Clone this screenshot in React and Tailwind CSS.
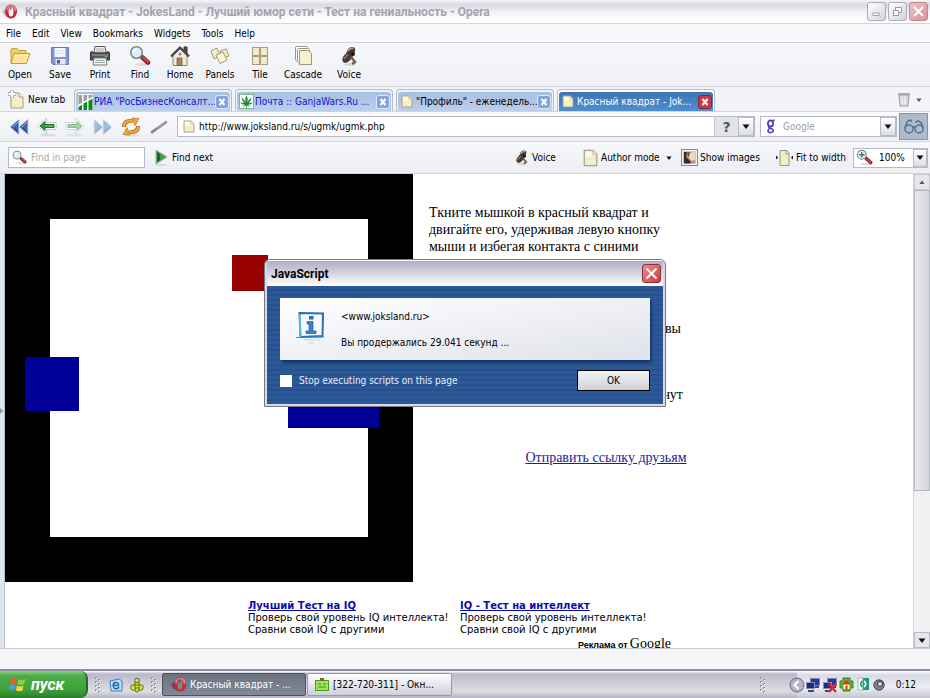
import React from "react";

const UI = "font-['DejaVu_Sans_Condensed','Noto_Sans',sans-serif]";

function OperaIcon({ dim }) {
  return (
    <svg width="16" height="17" viewBox="0 0 16 17" className="shrink-0">
      <path d="M0 8 Q2 14 8 15 L6 5 Z" fill={dim ? "#b9a4ac" : "#4d3a45"} opacity="0.7" />
      <ellipse cx="9" cy="8.500" rx="6" ry="7" fill="#c22a32" />
      <path d="M4 5 Q9 -1 14 4 Q15 7 13 9 Q12 3 9 3 Q6 4 5 9 Z" fill="#e57f80" />
      <ellipse cx="9" cy="8.500" rx="2.500" ry="5" fill={dim ? "#f4f0f4" : "#7f8898"} />
      <path d="M7 4.500 Q8.500 3 10 4.500 L9 8 Z" fill="#8e1f29" opacity="0.6" />
    </svg>
  );
}

function DocIcon({ w = 12, h = 13 }) {
  return (
    <svg width={w} height={h} viewBox="0 0 12 14" preserveAspectRatio="none" className="shrink-0">
      <path d="M1 1 H8 L11 4 V13 H1 Z" fill="#f5edc4" stroke="#a5a192" strokeWidth="1" />
      <path d="M2 2 H7 V6 H2 Z" fill="#fffbe6" />
      <path d="M8 1 V4 H11 Z" fill="#fff" stroke="#b8b29a" strokeWidth="0.7" />
    </svg>
  );
}

function OpenIcon() {
  return (
    <svg width="22" height="22" viewBox="0 0 22 22">
      <path d="M2 18 V5 Q2 3.500 4 3.500 H8 L10 5.500 H17 V9" fill="#f3cf62" stroke="#c89b36" />
      <path d="M2 18.500 L5 8.500 H21 L17.500 18.500 Z" fill="#ffe595" stroke="#c89a35" />
      <path d="M6 10 H19" stroke="#fff6cd" />
    </svg>
  );
}
function SaveIcon() {
  return (
    <svg width="22" height="22" viewBox="0 0 22 22">
      <path d="M2.500 2.500 H19.500 V19.500 H4 L2.500 18 Z" fill="#8496d6" stroke="#6a7abc" />
      <rect x="5.500" y="3" width="11" height="9" fill="#f4f6fd" />
      <path d="M7 5.500 H15 M7 8 H15" stroke="#dbe1f4" />
      <rect x="6.500" y="14" width="10" height="5.500" fill="#e3e7f5" />
      <rect x="8" y="15" width="3" height="3.500" fill="#4c5ba1" />
    </svg>
  );
}
function PrintIcon() {
  return (
    <svg width="22" height="22" viewBox="0 0 22 22">
      <path d="M5 8 L6 1.500 H16 L17 8 Z" fill="#f2f2f2" stroke="#555" />
      <path d="M7 4 H15 M7 6 H15" stroke="#aaa" />
      <path d="M1.500 8 Q1.500 6.500 3 6.500 L5 8 H17 L19 6.500 Q20.500 7 20.500 9 V15 H1.500 Z" fill="#55575b" stroke="#303236" />
      <path d="M3 10 H19" stroke="#9b9da3" />
      <path d="M5 13 H17 L18 20 H4 Z" fill="#f4f4f0" stroke="#777" />
      <path d="M6.500 15.500 H15.500 M6 17.500 H16" stroke="#9aa" />
      <rect x="16" y="11" width="2" height="1" fill="#76cf65" />
    </svg>
  );
}
function MagnifierIcon({ size = 22, plus }) {
  return (
    <svg width={size} height={size} viewBox="0 0 22 22" className="shrink-0">
      <ellipse cx="13" cy="19.500" rx="7" ry="1.500" fill="#d9dade" />
      <path d="M12 11 L14 13" stroke="#666" strokeWidth="2.500" />
      <path d="M13.500 12.500 L19 17.500" stroke="#7d1f24" strokeWidth="4.500" strokeLinecap="round" />
      <path d="M14 12.500 L19 17" stroke="#cf4a4c" strokeWidth="2.200" strokeLinecap="round" />
      <circle cx="7.500" cy="7.500" r="5.800" fill="#dceef6" stroke="#7d888f" strokeWidth="1.500" />
      <path d="M4 7 Q5 3.500 9 4" stroke="#fff" strokeWidth="1.500" fill="none" />
      {plus && <path d="M7.500 4 V11 M4 7.500 H11" stroke="#3c7a55" strokeWidth="1.800" />}
    </svg>
  );
}
function HomeIcon() {
  return (
    <svg width="22" height="22" viewBox="0 0 22 22">
      <path d="M4 10 L11 4 L18 10 V20.500 H4 Z" fill="#f2ecd5" stroke="#8c8672" />
      <path d="M15 2 H18 V9 L15 6 Z" fill="#6b4a40" stroke="#3b2d2b" />
      <path d="M2 11.500 L11 2.500 L20 11.500" stroke="#46484d" strokeWidth="2.400" fill="none" strokeLinejoin="round" />
      <rect x="8" y="13" width="5" height="7.500" fill="#a88262" stroke="#6d5640" strokeWidth="0.700" />
      <circle cx="11" cy="9" r="1.500" fill="#77889b" />
    </svg>
  );
}
function PanelsIcon() {
  return (
    <svg width="22" height="22" viewBox="0 0 22 22">
      <g stroke="#a29b7a" fill="#f4ecc6" strokeLinejoin="round">
        <path d="M11 6 L17 4 L20 11 L14 13 Z" />
        <path d="M2 6 L8 3 L11 11 L5 14 Z" />
        <path d="M7 10 L14 7 L18 15 L11 18.500 Z" fill="#fff7d8" />
      </g>
    </svg>
  );
}
function TileIcon() {
  return (
    <svg width="22" height="22" viewBox="0 0 22 22">
      <g fill="#f3ebc7" stroke="#a59f88">
        <rect x="3.500" y="2.500" width="7" height="8" />
        <rect x="11.500" y="2.500" width="7" height="8" />
        <rect x="3.500" y="11.500" width="7" height="8" />
        <rect x="11.500" y="11.500" width="7" height="8" />
      </g>
    </svg>
  );
}
function CascadeIcon() {
  return (
    <svg width="22" height="22" viewBox="0 0 22 22">
      <g stroke="#9c977f" strokeLinejoin="round">
        <rect x="3.500" y="1.500" width="12" height="14" rx="1" fill="#fff" />
        <rect x="5.500" y="3.500" width="12" height="14" rx="1" fill="#fff" />
        <path d="M7.500 5.500 H16 L19.500 8.500 V19.500 H7.500 Z" fill="#f8f1cf" />
      </g>
    </svg>
  );
}
function VoiceIcon({ size = 22 }) {
  return (
    <svg width={size} height={size} viewBox="0 0 22 22" className="shrink-0">
      <ellipse cx="12" cy="19.500" rx="6" ry="1.500" fill="#d8d8dc" />
      <path d="M9 7 Q10 2 14 2 Q18 2 17 6 L15 11 Q11 18 7 18 Q3 17 5 12 Z" fill="#433832" />
      <path d="M10 6 Q12 2.500 15.500 3.500" stroke="#a59d99" strokeWidth="1.800" fill="none" />
      <path d="M6 14 L10 9" stroke="#8a7a70" strokeWidth="1.500" />
      <path d="M13 12 L17 17 L14 19" stroke="#7b5b42" strokeWidth="2.400" fill="none" />
      <circle cx="15" cy="9" r="2" fill="#1f1a19" />
    </svg>
  );
}

const tools = [
  ["Open", <OpenIcon />, "w-10"],
  ["Save", <SaveIcon />, "w-10"],
  ["Print", <PrintIcon />, "w-10"],
  ["Find", <MagnifierIcon />, "w-10"],
  ["Home", <HomeIcon />, "w-10"],
  ["Panels", <PanelsIcon />, "w-10"],
  ["Tile", <TileIcon />, "w-10"],
  ["Cascade", <CascadeIcon />, "w-[46px]"],
  ["Voice", <VoiceIcon />, "w-[46px]"],
];

function ChartFavicon() {
  return (
    <svg width="15" height="16" viewBox="0 0 15 16" className="shrink-0">
      <rect width="15" height="16" fill="#f5faf3" />
      <path d="M0.500 1 H4 V9 L0.500 11 Z M5.500 1 H9 V6 L5.500 8 Z M10.500 1 H14.500 V3 L10.500 5 Z" fill="#98a09a" />
      <path d="M0.500 16 V13 L4 10.500 V16 Z M5.500 16 V9.500 L9 7.500 V16 Z M10.500 16 V6.500 L14.500 4.500 V16 Z" fill="#108a1c" />
      <path d="M0 12 Q6 8 15 3.500" stroke="#fff" strokeWidth="1.200" fill="none" />
    </svg>
  );
}
function LeafFavicon() {
  return (
    <svg width="15" height="15" viewBox="0 0 15 15" className="shrink-0">
      <rect x="0.500" y="0.500" width="14" height="14" fill="#fff" stroke="#7fb884" />
      <path
        d="M7.500 1 L8.800 5 L8.300 8 L12.500 3 L11.500 7 L9.500 9 L14 8.500 L11.500 10.500 L9 10.500 L11.500 13 L8 11.500 L7.800 14 H7.200 L7 11.500 L3.500 13 L6 10.500 L3.500 10.500 L1 8.500 L5.500 9 L3.500 7 L2.500 3 L6.700 8 L6.200 5 Z"
        fill="#1c8a34"
      />
    </svg>
  );
}

function Tab({ icon, text, color, active }) {
  return (
    <div
      className={
        "mr-[3px] flex h-[22px] w-[158px] items-center rounded-t-[4px] border border-b-0 border-[#b4bdcb] px-px pt-[2px] " +
        (active ? "bg-white" : "bg-[#eef2fa]")
      }
    >
      <div
        className={
          "flex h-full min-w-0 flex-1 items-center gap-px rounded-t-[3px] px-px " +
          (active ? "bg-linear-to-b from-[#3d74b5] to-[#4d8fd0]" : "bg-linear-to-b from-[#a9bfe2] to-[#bccfeb]")
        }
      >
        <span className="flex w-4 shrink-0 justify-center">{icon}</span>
        <button className={"min-w-0 flex-1 text-left whitespace-nowrap " + color}>{text}</button>
        <button
          aria-label="Close tab"
          className={
            "flex h-[14px] w-[14px] shrink-0 items-center justify-center rounded-[3px] border " +
            (active ? "border-[#8a2532] bg-[#c9394a]" : "border-[#dfe9f8] bg-[#7fa6dc]")
          }
        >
          <svg width="8" height="8" viewBox="0 0 8 8">
            <path d="M1.500 1 L6.500 7 M6.500 1 L1.500 7" stroke="#fff" strokeWidth="2" />
          </svg>
        </button>
      </div>
    </div>
  );
}

function Arrow({ color = "#111", up, small }) {
  return (
    <svg width={small ? 6 : 8} height={small ? 4 : 5} viewBox="0 0 8 5">
      <path d={up ? "M0.500 5 L4 0.500 L7.500 5 Z" : "M0.500 0.500 H7.500 L4 5 Z"} fill={color} />
    </svg>
  );
}

const NAV = "flex h-6 w-[28px] items-center justify-center";

function NavIcons() {
  return (
    <div className="flex w-[169px] items-center">
      <button aria-label="Rewind" className={NAV}>
        <svg width="20" height="18" viewBox="0 0 20 18">
          <path d="M10 1 V17 L1 9 Z M19 1 V17 L10 9 Z" fill="#3565ad" stroke="#d3dbe8" />
          <path d="M9 4 L4 9 M18 4 L13 9" stroke="#8eb4e6" />
          <path d="M9 14 L5 10 M18 14 L14 10" stroke="#1c3f7c" />
        </svg>
      </button>
      <button aria-label="Back" className={NAV}>
        <svg width="20" height="20" viewBox="0 0 20 20">
          <ellipse cx="11" cy="18" rx="8" ry="1.500" fill="#dadce0" />
          <path d="M0.500 9 L9.500 1 V5.500 H19 V12.500 H9.500 V17 Z" fill="#fff" stroke="#c6cace" />
          <path d="M3 9 L8 4.500 V7.500 H17 V10.500 H8 V13.500 Z" fill="#38993a" stroke="#256d2c" />
          <path d="M8 9 H16" stroke="#78c96b" />
        </svg>
      </button>
      <button aria-label="Forward" className={NAV}>
        <svg width="20" height="20" viewBox="0 0 20 20">
          <ellipse cx="9" cy="18" rx="8" ry="1.500" fill="#e0e2e6" />
          <path d="M19.500 9 L10.500 1 V5.500 H1 V12.500 H10.500 V17 Z" fill="#fff" stroke="#d2d6d9" />
          <path d="M17 9 L12 4.500 V7.500 H3 V10.500 H12 V13.500 Z" fill="#a6d3a6" stroke="#8dbb91" />
        </svg>
      </button>
      <button aria-label="Fast forward" className={NAV}>
        <svg width="20" height="18" viewBox="0 0 20 18">
          <path d="M1 1 V17 L10 9 Z M10 1 V17 L19 9 Z" fill="#a0b9de" stroke="#dde4ee" />
          <path d="M2.500 14 L8 9.500 M11.500 14 L17 9.500" stroke="#8199c2" />
        </svg>
      </button>
      <button aria-label="Reload" className={NAV}>
        <svg width="20" height="20" viewBox="0 0 20 20">
          <ellipse cx="11" cy="18.500" rx="7" ry="1" fill="#d8d9dd" />
          <g fill="none" stroke="#ab6c22" strokeWidth="4">
            <path d="M3 10 Q3 4 9 4 H11" />
            <path d="M17 9 Q17 15 11 15 H9" />
          </g>
          <g fill="none" stroke="#f4a636" strokeWidth="2.600">
            <path d="M3 9.500 Q3 4 9 4 H12" />
            <path d="M17 9.500 Q17 15 11 15 H8" />
          </g>
          <path d="M11 1 L18 1.500 L14 8.500 Z" fill="#f4a636" stroke="#b8731f" strokeWidth="0.700" />
          <path d="M9 18 L2 17.500 L6 10.500 Z" fill="#f4a636" stroke="#b8731f" strokeWidth="0.700" />
        </svg>
      </button>
      <button aria-label="Wand" className={NAV}>
        <svg width="20" height="18" viewBox="0 0 20 18">
          <path d="M2 16 L17 5" stroke="#d5d7db" strokeWidth="2" />
          <path d="M3 14 L17 4" stroke="#80848b" strokeWidth="2.400" strokeLinecap="round" />
          <path d="M8 10 L17 3.500" stroke="#b4b8bf" />
        </svg>
      </button>
    </div>
  );
}

function Grip() {
  return (
    <svg width="7" height="18" viewBox="0 0 7 18">
      {[1, 5, 9, 13].map((y) => (
        <g key={y}>
          <rect x="0" y={y} width="2" height="2" fill="#8f91a4" />
          <rect x="1" y={y + 1} width="1" height="1" fill="#fff" />
          <rect x="3" y={y + 2} width="2" height="2" fill="#8f91a4" />
          <rect x="4" y={y + 3} width="1" height="1" fill="#fff" />
        </g>
      ))}
    </svg>
  );
}

function Monitors({ off }) {
  return (
    <svg width="16" height="16" viewBox="0 0 16 16">
      <rect x="5.500" y="1.500" width="9" height="7" fill="#2536a0" stroke="#8087ab" />
      <rect x="1.500" y="5.500" width="8" height="6" fill="#1c2a8c" stroke="#8a90b0" />
      <path d="M3 14 H9 M10 10 H14" stroke="#44485f" strokeWidth="2" />
      {off && <path d="M7 7 L14 15 M14 7 L7 15" stroke="#e2222a" strokeWidth="2.400" />}
    </svg>
  );
}

function Dialog() {
  return (
    <div
      role="dialog"
      aria-label="JavaScript"
      className="absolute top-[259px] left-1/2 w-[402px] -translate-x-1/2 overflow-hidden rounded-t-[6px] border border-[#77778e] bg-[#d9d9e4] p-[2px] pt-0"
    >
      <header className="flex h-[26px] items-center justify-between border-t border-white bg-linear-to-b from-[#adadc6] via-[#d5d5e1] to-[#ffffff] pr-[2px] pl-[4px]">
        <h2 className="font-[Roboto,sans-serif] text-xs font-bold text-black">JavaScript</h2>
        <button
          aria-label="Close"
          className="flex h-[19px] w-[19px] items-center justify-center rounded-[3px] border border-[#8e3440] bg-linear-to-br from-[#ec8d8b] to-[#c63a45]"
        >
          <svg width="13" height="13" viewBox="0 0 13 13">
            <path d="M1.500 1.500 L11.500 11.500 M11.500 1.500 L1.500 11.500" stroke="#fff" strokeWidth="2" />
          </svg>
        </button>
      </header>
      <div className="flex flex-col bg-[repeating-linear-gradient(to_bottom,#2b5997_0px,#2b5997_3px,#28528e_3px,#28528e_5px)] px-[13px] pt-[12px] pb-[13px]">
        <div className="flex h-[62px] bg-linear-to-br from-white to-[#dfe2ea] shadow-[2px_3px_2px_#173a6c]">
          <svg width="30" height="37" viewBox="0 0 30 37" className="mt-[12px] ml-[16px] shrink-0">
            <path d="M3.500 3 L27 3.500 L26.500 26 L4.500 27 Z" fill="#f6fbff" stroke="#2670b6" strokeWidth="2" />
            <path d="M4 4 V27" stroke="#58b1e8" strokeWidth="2" />
            <rect x="13" y="6" width="4.500" height="3.500" fill="#2c68ab" />
            <path d="M11 11.500 H17 V21 H20 V23.500 H10 V21 H13 V14 H11 Z" fill="#3c82c6" stroke="#265d9d" strokeWidth="0.700" />
            <path d="M0 27.500 L28 27" stroke="#3f8ccb" />
            <path d="M8 30 H24 M13 33 H18" stroke="#d6e5f2" strokeWidth="2" fill="none" />
          </svg>
          <div className="flex flex-col gap-[13px] pt-[12px] pl-[15px]">
            <p className="leading-[13px]">&lt;www.joksland.ru&gt;</p>
            <p className="leading-[13px]">Вы продержались 29.041 секунд ...</p>
          </div>
        </div>
        <div className="mt-[10px] flex items-center justify-between">
          <label className="flex items-center gap-[7px] text-[#e4effc]">
            <input type="checkbox" className="h-[12px] w-[12px] appearance-none bg-white" />
            Stop executing scripts on this page
          </label>
          <button className="h-[21px] w-[73px] border border-black bg-linear-to-b from-[#f2f2f5] to-[#d0d2d9]">OK</button>
        </div>
      </div>
    </div>
  );
}

export default function App() {
  return (
    <div className={"relative flex h-screen flex-col overflow-hidden bg-[#f3f4f8] text-[10px] text-black " + UI}>
      <header className="flex h-6 shrink-0 items-center border-b border-[#d2d4dc] bg-[linear-gradient(#f5f5f9_0px,#d8d8e4_5px,#f2f2f7_12px,#ffffff_22px)] pr-[2px] pl-[2px]">
        <OperaIcon dim />
        <h1 className="min-w-0 flex-1 truncate pl-[7px] font-[Roboto,sans-serif] text-xs font-bold text-[#a3a3a9]">
          Красный квадрат - JokesLand - Лучший юмор сети - Тест на гениальность - Opera
        </h1>
        <div className="flex gap-[2px]">
          <button aria-label="Minimize" className="flex h-[19px] w-[19px] items-center justify-center rounded-[3px] border border-[#aaaab8] bg-linear-to-br from-white to-[#d3d3de]">
            <svg width="11" height="11" viewBox="0 0 11 11"><rect x="2" y="7" width="6" height="2.500" fill="#fff" stroke="#a4a4b0" /></svg>
          </button>
          <button aria-label="Restore" className="flex h-[19px] w-[19px] items-center justify-center rounded-[3px] border border-[#aaaab8] bg-linear-to-br from-white to-[#d3d3de]">
            <svg width="11" height="11" viewBox="0 0 11 11" fill="#fff" stroke="#9a9aa8">
              <rect x="3.500" y="1.500" width="6" height="5" /><rect x="1.500" y="4.500" width="5" height="5" />
            </svg>
          </button>
          <button aria-label="Close" className="flex h-[19px] w-[19px] items-center justify-center rounded-[3px] border border-[#bd8890] bg-linear-to-br from-[#f2c3c4] to-[#dc9096]">
            <svg width="11" height="11" viewBox="0 0 11 11"><path d="M1 1 L10 10 M10 1 L1 10" stroke="#fff" strokeWidth="2" /></svg>
          </button>
        </div>
      </header>

      <nav className="flex h-[19px] shrink-0 items-center gap-[11px] border-b border-[#d0d2da] bg-[#f8f9fb] pl-[6px]">
        {["File", "Edit", "View", "Bookmarks", "Widgets", "Tools", "Help"].map((m) => (
          <button key={m}>{m}</button>
        ))}
      </nav>

      <div className="flex h-[44px] shrink-0 border-b border-[#d3d5dd] bg-linear-to-b from-[#f6f7fa] to-[#eff0f5]">
        {tools.map(([label, icon, w]) => (
          <button key={label} className={"flex flex-col items-center pt-[2px] " + w}>
            {icon}
            <span className="mt-[1px] leading-[14px]">{label}</span>
          </button>
        ))}
      </div>

      <div className="flex h-[25px] shrink-0 items-end justify-between border-b border-[#d3d5dd] pl-[8px]">
        <div className="flex items-end">
          <button className="flex h-[23px] w-[66px] items-center gap-[3px]">
            <svg width="17" height="19" viewBox="0 0 17 19" className="shrink-0">
              <path d="M4 3 H11 L15 7 V18 H3 V5 Z" fill="#f5edc6" stroke="#a39e86" />
              <path d="M11 3 V7 H15" fill="#fff" stroke="#a39e86" />
              <path d="M4 0 V8 M0 4 H8" stroke="#a5a5a5" strokeWidth="3.500" />
              <path d="M4 0.500 V7.500 M0.500 4 H7.500" stroke="#fff" strokeWidth="2" />
            </svg>
            <span className="whitespace-nowrap">New tab</span>
          </button>
          <Tab icon={<ChartFavicon />} text={'РИА "РосБизнесКонсалт...'} color="text-[#1014d8]" />
          <Tab icon={<LeafFavicon />} text="Почта :: GanjaWars.Ru ..." color="text-[#1014d8]" />
          <Tab icon={<DocIcon />} text={'"Профиль" - еженедель...'} color="text-black" />
          <Tab icon={<DocIcon />} text="Красный квадрат - Jok..." color="text-white" active />
        </div>
        <button aria-label="Closed tabs" className="flex h-[23px] items-center gap-[5px] pr-[8px]">
          <svg width="14" height="15" viewBox="0 0 14 15">
            <path d="M2 3 H12 L11 14 H3 Z" fill="#d6d7da" stroke="#9c9ea3" />
            <path d="M1 2 H13" stroke="#a9abb0" strokeWidth="2" />
            <path d="M5 5 V12 M8 5 V12" stroke="#fff" />
          </svg>
          <Arrow small color="#555" />
        </button>
      </div>

      <div className="flex h-[30px] shrink-0 items-center border-b border-[#d3d5dd] bg-linear-to-b from-[#fafafc] to-[#eef0f5] pr-[2px] pl-[5px]">
        <NavIcons />
        <div className="ml-[3px] flex h-[21px] min-w-0 flex-1 items-center border border-[#b6bac4] bg-white">
          <span className="flex w-[21px] justify-center"><DocIcon /></span>
          <input aria-label="Address" defaultValue="http://www.joksland.ru/s/ugmk/ugmk.php" className="min-w-0 flex-1 outline-none" />
          <button aria-label="Page information" className="h-full w-[24px] border-l border-[#c5c8cf] bg-[#e3e4e8] font-['DejaVu_Sans',sans-serif] text-sm leading-none font-bold text-[#55575c]">?</button>
          <button aria-label="Address history" className="flex h-full w-4 items-center justify-center border border-[#b9bcc5] bg-linear-to-b from-white to-[#dcdee4]"><Arrow /></button>
        </div>
        <div className="ml-[5px] flex h-[21px] w-[137px] items-center border border-[#b6bac4] bg-white">
          <svg width="22" height="17" viewBox="0 0 22 17" fill="none" stroke="#4f43b4">
            <ellipse cx="9.500" cy="5.500" rx="2.600" ry="3" strokeWidth="1.800" />
            <path d="M11 3 L13.500 2" strokeWidth="1.400" />
            <path d="M8 8.500 Q7 10 10 10.500 Q13 11.500 12 13.500 Q10 15.500 7.500 14 Q6 12.500 8.500 10.500" strokeWidth="1.600" />
          </svg>
          <input aria-label="Search" placeholder="Google" className="min-w-0 flex-1 outline-none placeholder:text-[#a0a0a4]" />
          <button aria-label="Search engines" className="flex h-full w-4 items-center justify-center border border-[#b9bcc5] bg-linear-to-b from-white to-[#dcdee4]"><Arrow /></button>
        </div>
        <button aria-label="View bar" className="ml-[2px] flex h-[27px] w-[29px] items-center justify-center border border-[#8496a9] bg-[#acbccd]">
          <svg width="22" height="17" viewBox="0 0 22 17" fill="none" stroke="#566f88" strokeWidth="1.500">
            <circle cx="6" cy="11" r="4" /><circle cx="16" cy="11" r="4" />
            <path d="M9.500 9.500 Q11 8 12.500 9.500 M2 10 Q3.500 3 7 2 Q8.500 2 8.500 4 M20 10 Q19 4 15.500 3 Q13 2.500 13 5" />
          </svg>
        </button>
      </div>

      <div className="flex h-[32px] shrink-0 items-center justify-between border-b border-[#cfd2da] bg-linear-to-b from-[#f7f8fb] to-[#eceef4] pr-[2px] pl-[8px]">
        <div className="flex items-center">
          <div className="flex h-[21px] w-[137px] items-center border border-[#b6bac4] bg-white pl-[3px]">
            <MagnifierIcon size={15} />
            <input aria-label="Find in page" placeholder="Find in page" className="ml-[4px] min-w-0 flex-1 outline-none placeholder:text-[#a9a69c]" />
          </div>
          <button className="ml-[10px] flex items-center gap-[4px]">
            <svg width="13" height="17" viewBox="0 0 13 17">
              <ellipse cx="6" cy="16" rx="6" ry="1" fill="#d5d7db" />
              <path d="M1 1 V15 L12 8 Z" fill="#3ba23d" stroke="#a9b1ae" /><path d="M2 3 V13 L5 11 V5 Z" fill="#1e6331" />
            </svg>
            Find next
          </button>
        </div>
        <div className="flex items-center whitespace-nowrap">
          <button className="flex w-[70px] items-center gap-[2px]"><VoiceIcon size={17} />Voice</button>
          <button className="flex w-[98px] items-center gap-[3px]"><DocIcon w={15} h={18} />Author mode<span className="ml-[3px]"><Arrow small /></span></button>
          <button className="flex w-[95px] items-center gap-[2px]">
            <svg width="17" height="17" viewBox="0 0 17 17" className="shrink-0">
              <rect x="0.500" y="0.500" width="16" height="16" fill="#f5f5f5" stroke="#888" />
              <rect x="2.500" y="2.500" width="12" height="12" fill="#b98e70" />
              <path d="M3 3 L6 3 L5 8 L10 13 L9 14.500 H3 Z" fill="#3a2a25" /><path d="M8 4 L14 3 V11 L11 12 L8 9 Z" fill="#f0d8c4" /><path d="M6 4 L9 3 L8 8 Z" fill="#6b4636" />
            </svg>
            Show images
          </button>
          <button className="flex w-[77px] items-center gap-[3px]">
            <svg width="17" height="18" viewBox="0 0 17 18" className="shrink-0">
              <path d="M4 1.500 H11 L13 4 V16.500 H4 Z" fill="#f5edc6" stroke="#9c977f" /><path d="M10 1.500 V5 H13" fill="#fff" stroke="#9c977f" />
              <path d="M0 6.500 L2 8.500 L0 10.500 Z M17 6.500 L15 8.500 L17 10.500 Z" fill="#111" />
            </svg>
            Fit to width
          </button>
          <div className="relative flex h-[20px] w-[75px] items-center border border-[#b6bac4] bg-white pl-[2px]">
            <MagnifierIcon size={17} plus />
            <select aria-label="Zoom" defaultValue="100%" className="ml-[6px] h-full min-w-0 flex-1 appearance-none outline-none">
              <option>100%</option>
            </select>
            <span className="pointer-events-none flex h-full w-[14px] items-center justify-center border border-[#b9bcc5] bg-linear-to-b from-white to-[#dcdee4]"><Arrow /></span>
          </div>
        </div>
      </div>

      <div className="flex min-h-0 flex-1">
        <aside className="flex w-[5px] shrink-0 items-center border-r border-[#b9c0ca] bg-[#dfe5ee]">
          <svg width="4" height="8" viewBox="0 0 4 8"><path d="M0 1 L3.500 4 L0 7 Z" fill="#8b97ac" /></svg>
        </aside>
        <main className="min-w-0 flex-1 overflow-hidden bg-white">
          <div className="flex">
            <div className="relative h-[408px] w-[408px] shrink-0 border-[45px] border-black bg-white">
              <div className="absolute top-[36px] left-[182px] h-[36px] w-[36px] bg-[#990000]" />
              <div className="absolute top-[138px] left-[-25px] h-[54px] w-[54px] bg-[#000099]" />
              <div className="absolute top-[182px] left-[238px] h-[27px] w-[91px] bg-[#000099]" />
            </div>
            <div className="pt-[30px] pl-[16px] font-['Liberation_Serif',serif] text-sm leading-[17px]">
              <p className="w-[260px] whitespace-nowrap">
                Ткните мышкой в красный квадрат и<br />двигайте его, удерживая левую кнопку<br />мыши и избегая контакта с синими
              </p>
              <p className="mt-[65px] w-[252px] text-right">вы</p>
              <p className="mt-[49px] w-[254px] text-right">нут</p>
              <p className="mt-[46px] w-[354px] text-center"><a href="#send" className="text-[#1a1a9c] underline">Отправить ссылку друзьям</a></p>
            </div>
          </div>
          <div className="mt-[18px] ml-[243px] flex w-[423px] flex-wrap font-['DejaVu_Sans',sans-serif] text-[10px] leading-[12px] whitespace-nowrap">
            <div className="w-[212px]">
              <a href="#test" className="font-bold text-[#0c0cae] underline">Лучший Тест на IQ</a>
              <p>Проверь свой уровень IQ интеллекта!</p>
              <p>Сравни свой IQ с другими</p>
            </div>
            <div className="flex-1">
              <a href="#iq" className="font-bold text-[#0c0cae] underline">IQ - Тест на интеллект</a>
              <p>Проверь свой уровень интеллекта!</p>
              <p>Сравни свой IQ с другими</p>
            </div>
            <p className="flex w-full items-baseline justify-end gap-[2px]">
              <span className="font-['Liberation_Sans',sans-serif] text-[9px] font-bold">Реклама от</span>
              <span className="font-['Liberation_Serif',serif] text-sm leading-[16px]">Google</span>
            </p>
          </div>
        </main>
        <div className="flex w-[17px] shrink-0 flex-col border-l border-[#d5d6da] bg-[#f1f1f4]">
          <button aria-label="Scroll up" className="flex h-4 items-center justify-center border border-[#c9cad0] bg-[#e6e7ec]"><Arrow up small color="#555" /></button>
          <div className="h-[301px] border border-[#b5b7c0] bg-linear-to-r from-[#e9eaef] to-[#d4d6dd]" />
          <div className="flex-1" />
          <button aria-label="Scroll down" className="flex h-4 items-center justify-center border border-[#b9bbc4] bg-[#e6e7ec]"><Arrow /></button>
        </div>
      </div>

      <div className="h-[21px] shrink-0 border-t border-[#c9cbd1] bg-[#f5f6fa]" />

      <footer className="flex h-[29px] shrink-0 items-stretch border-t-2 border-[#8b8ba3] bg-[linear-gradient(#fdfdff_0px,#b9b9cd_3px,#c9c9d7_10px,#dededf_20px,#b6b6c6_27px)]">
        <button className="flex w-[88px] items-center gap-[4px] rounded-r-[8px] border-r-2 border-[#1f6f22] bg-[linear-gradient(#8fd088_0px,#4aab47_5px,#3fa33d_18px,#2a7d2b_27px)] pl-[9px] text-white">
          <svg width="18" height="17" viewBox="0 0 18 17">
            <path d="M2 3 Q5 1 8 3 L7 8 Q4 6 1 8 Z" fill="#ee5b31" /><path d="M9.500 3 Q13 5 16.500 3 L15 8 Q12 10 8.500 8 Z" fill="#8bd046" />
            <path d="M0.500 9.500 Q4 7.500 6.500 9.500 L5.500 14 Q3 12.500 0 14 Z" fill="#5c93ee" /><path d="M8 9.500 Q11 11.500 14.500 9.500 L13.500 14.500 Q10 16 7 14.500 Z" fill="#fcd43c" />
          </svg>
          <span className="font-[Roboto,sans-serif] text-base leading-none font-bold italic">пуск</span>
        </button>
        <div className="flex w-[74px] items-center justify-between pr-[4px] pl-[7px]">
          <Grip />
          <svg width="14" height="14" viewBox="0 0 14 14">
            <path d="M1 3 L10 1 L13 3 V13 H2 Z" fill="#b9e1f6" stroke="#3e7fb4" />
            <path d="M10 9 Q8 12 5 10 Q3 6 6 4.500 Q10 4 9.500 7.500 H5" stroke="#2066b0" strokeWidth="1.500" fill="none" />
          </svg>
          <svg width="14" height="16" viewBox="0 0 14 16" fill="#dfe03a" stroke="#5c6a10">
            <circle cx="3.500" cy="10.500" r="2.800" /><circle cx="10.500" cy="10.500" r="2.800" />
            <rect x="5" y="4" width="4" height="11" rx="2" /><circle cx="7" cy="3.500" r="2.300" />
            <path d="M5 8 H9 M5 11 H9" stroke="#4b8a1b" />
          </svg>
          <Grip />
        </div>
        <button className="mt-[2px] flex h-[23px] w-[144px] items-center gap-[3px] rounded-[2px] border border-[#4c515e] bg-linear-to-b from-[#6b717f] to-[#828997] pl-[8px] whitespace-nowrap text-white">
          <OperaIcon />Красный квадрат - ...
        </button>
        <button className="mt-[2px] ml-[1px] flex h-[23px] w-[145px] items-center gap-[4px] rounded-[2px] border border-[#9899ab] bg-linear-to-b from-white to-[#cfcfdb] pl-[7px] whitespace-nowrap">
          <svg width="14" height="13" viewBox="0 0 14 13">
            <rect x="0.500" y="2.500" width="13" height="10" fill="#a4e455" stroke="#4e962a" />
            <rect x="5" y="0" width="4" height="3" fill="#7d6b2a" /><path d="M3 6 H6 M8 6 H11 M3 9 H11" stroke="#3f8a20" />
          </svg>
          [322-720-311] - Окн...
        </button>
        <div className="flex flex-1 items-center justify-end pr-[30px]"><Grip /></div>
        <div className="flex w-[133px] items-center bg-[linear-gradient(#fdfdff_0px,#dadae6_4px,#eeeef3_16px,#c6c6d4_27px)]">
          <svg width="16" height="16" viewBox="0 0 16 16" className="-ml-2 shrink-0">
            <circle cx="8" cy="8" r="7" fill="#b4b4c4" stroke="#666778" /><path d="M9.500 4 L5.500 8 L9.500 12" stroke="#fff" strokeWidth="2" fill="none" />
          </svg>
          <div className="flex items-center gap-[1px]">
            <Monitors />
            <Monitors off />
            <svg width="15" height="15" viewBox="0 0 15 15">
              <path d="M4 1 H11 V4 H14 V11 H11 V14 H4 V11 H1 V4 H4 Z" fill="#65b534" stroke="#35801c" />
              <path d="M2.500 7.500 L7.500 3 L12.500 7.500 Z" fill="#d9352b" /><path d="M4.500 7.500 H10.500 V12 H4.500 Z" fill="#fff3c0" /><rect x="6.500" y="8.500" width="2" height="3.500" fill="#b34a2a" />
            </svg>
            <svg width="17" height="15" viewBox="0 0 17 15">
              <rect x="3" y="1" width="5" height="12" fill="#fff" stroke="#9abdb3" /><rect x="8" y="1" width="6" height="12" fill="#149a7d" />
              <path d="M7.500 4 Q4 7 7.500 10" stroke="#149a7d" strokeWidth="1.700" fill="none" /><path d="M9 4 Q12.500 7 9 10" stroke="#fff" strokeWidth="1.700" fill="none" />
            </svg>
            <svg width="13" height="14" viewBox="0 0 13 14">
              <circle cx="6" cy="7" r="5.200" fill="#83848e" stroke="#444650" /><circle cx="7" cy="6" r="2.600" fill="#cfd0d6" stroke="#33343c" />
            </svg>
          </div>
          <time className="ml-auto pr-[14px]">0:12</time>
        </div>
      </footer>

      <Dialog />
    </div>
  );
}
